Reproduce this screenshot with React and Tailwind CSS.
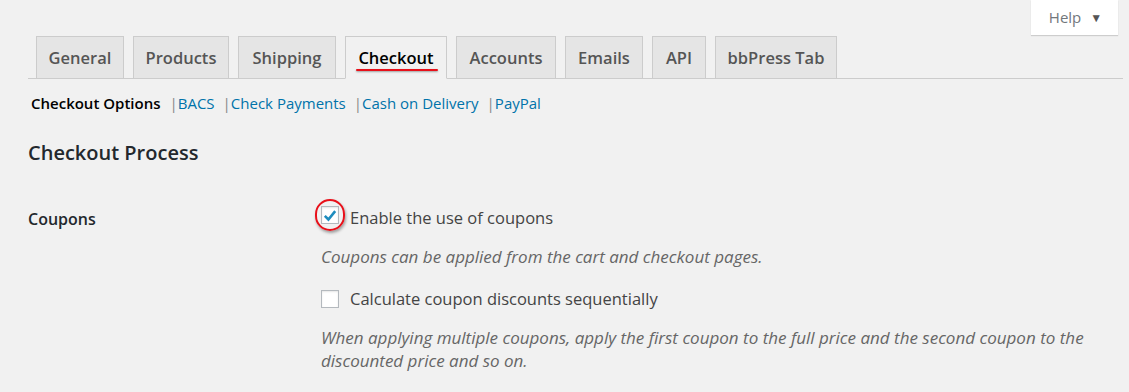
import React from "react";

const tabs = [
  { label: "General", w: "w-[88px]" },
  { label: "Products", w: "w-[96px]" },
  { label: "Shipping", w: "w-[98px]" },
  { label: "Checkout", w: "w-[102px]", active: true },
  { label: "Accounts", w: "w-[100px]" },
  { label: "Emails", w: "w-[78px]" },
  { label: "API", w: "w-[54px]" },
  { label: "bbPress Tab", w: "w-[122px]" },
];

function Checkbox({ checked }) {
  return (
    <span className="relative inline-flex h-[18px] w-[18px] shrink-0 items-center justify-center border border-[#b4b9be] bg-white shadow-[inset_0_1px_2px_rgba(0,0,0,0.1)]">
      {checked && (
        <svg viewBox="0 0 20 20" className="h-[17px] w-[17px]">
          <path d="M3.5 10.5 L8 15 L16.5 4.5" fill="none" stroke="#1e8cbe" strokeWidth="3.2" strokeLinejoin="miter" />
        </svg>
      )}
    </span>
  );
}

export default function App() {
  return (
    <div className="relative h-[392px] w-[1129px] overflow-hidden bg-[#f1f1f1] font-['Open_Sans','Noto_Sans',sans-serif] text-[#444]">
      <div className="flex h-[36px] justify-end pr-[11px]">
        <div className="flex h-[35px] w-[87px] items-center justify-center gap-[9px] bg-white pl-[2px] shadow-[0_1px_1px_rgba(0,0,0,0.15)] text-[15px] text-[#72777c]">
          <span>Help</span>
          <span className="text-[12px] text-[#555]">▼</span>
        </div>
      </div>

      <div className="ml-[28px] mr-[6px] flex gap-[9px] border-b border-[#ccc] pl-[8px]">
        {tabs.map((t) => (
          <div
            key={t.label}
            className={`relative -mb-px flex h-[43px] ${t.w} items-center justify-center border border-[#ccc] text-[16.5px] font-semibold ${
              t.active ? "border-b-[#f1f1f1] bg-[#f1f1f1] text-black" : "border-b-[#ccc] bg-[#e5e5e5] text-[#555]"
            }`}
          >
            <span className="pt-[1px]">{t.label}</span>
            {t.active && (
              <span className="absolute left-[10px] top-[32px] h-[2px] w-[82px] rounded-full bg-[#e8101a] shadow-[0_1px_2px_rgba(0,0,0,0.35)]" />
            )}
          </div>
        ))}
      </div>

      <div className="mt-[13px] flex items-center pl-[31px] text-[15px] leading-[22px]">
        <span className="font-semibold text-black">Checkout Options</span>
        <span className="ml-[9px] text-[#888]">|</span>
        <span className="text-[#0073aa]">BACS</span>
        <span className="ml-[8px] text-[#888]">|</span>
        <span className="text-[#0073aa]">Check Payments</span>
        <span className="ml-[8px] text-[#888]">|</span>
        <span className="text-[#0073aa]">Cash on Delivery</span>
        <span className="ml-[8px] text-[#888]">|</span>
        <span className="text-[#0073aa]">PayPal</span>
      </div>

      <h2 className="mt-[25px] pl-[28px] text-[20px] font-semibold leading-[28px] text-[#23282d]">Checkout Process</h2>

      <div className="mt-[40px] flex pl-[28px]">
        <div className="w-[293px] pt-[1px] text-[16px] font-semibold leading-[22px] text-[#23282d]">Coupons</div>
        <div className="flex flex-col">
          <label className="relative flex h-[22px] items-center gap-[11px] text-[16.5px] text-[#444]">
            <span className="relative">
              <Checkbox checked />
              <span className="absolute left-[-6px] top-[-7px] h-[32px] w-[30px] rounded-full border-2 border-[#e8101a] shadow-[1px_2px_3px_rgba(0,0,0,0.35)]" />
            </span>
            <span>Enable the use of coupons</span>
          </label>
          <p className="mt-[17px] text-[17px] italic leading-[22px] text-[#666]">
            Coupons can be applied from the cart and checkout pages.
          </p>
          <label className="mt-[20px] flex h-[22px] items-center gap-[11px] text-[16.5px] text-[#444]">
            <Checkbox />
            <span>Calculate coupon discounts sequentially</span>
          </label>
          <p className="mt-[16px] w-[800px] text-[17px] italic leading-[23px] text-[#666]">
            When applying multiple coupons, apply the first coupon to the full price and the second coupon to the discounted price and so on.
          </p>
        </div>
      </div>
    </div>
  );
}
